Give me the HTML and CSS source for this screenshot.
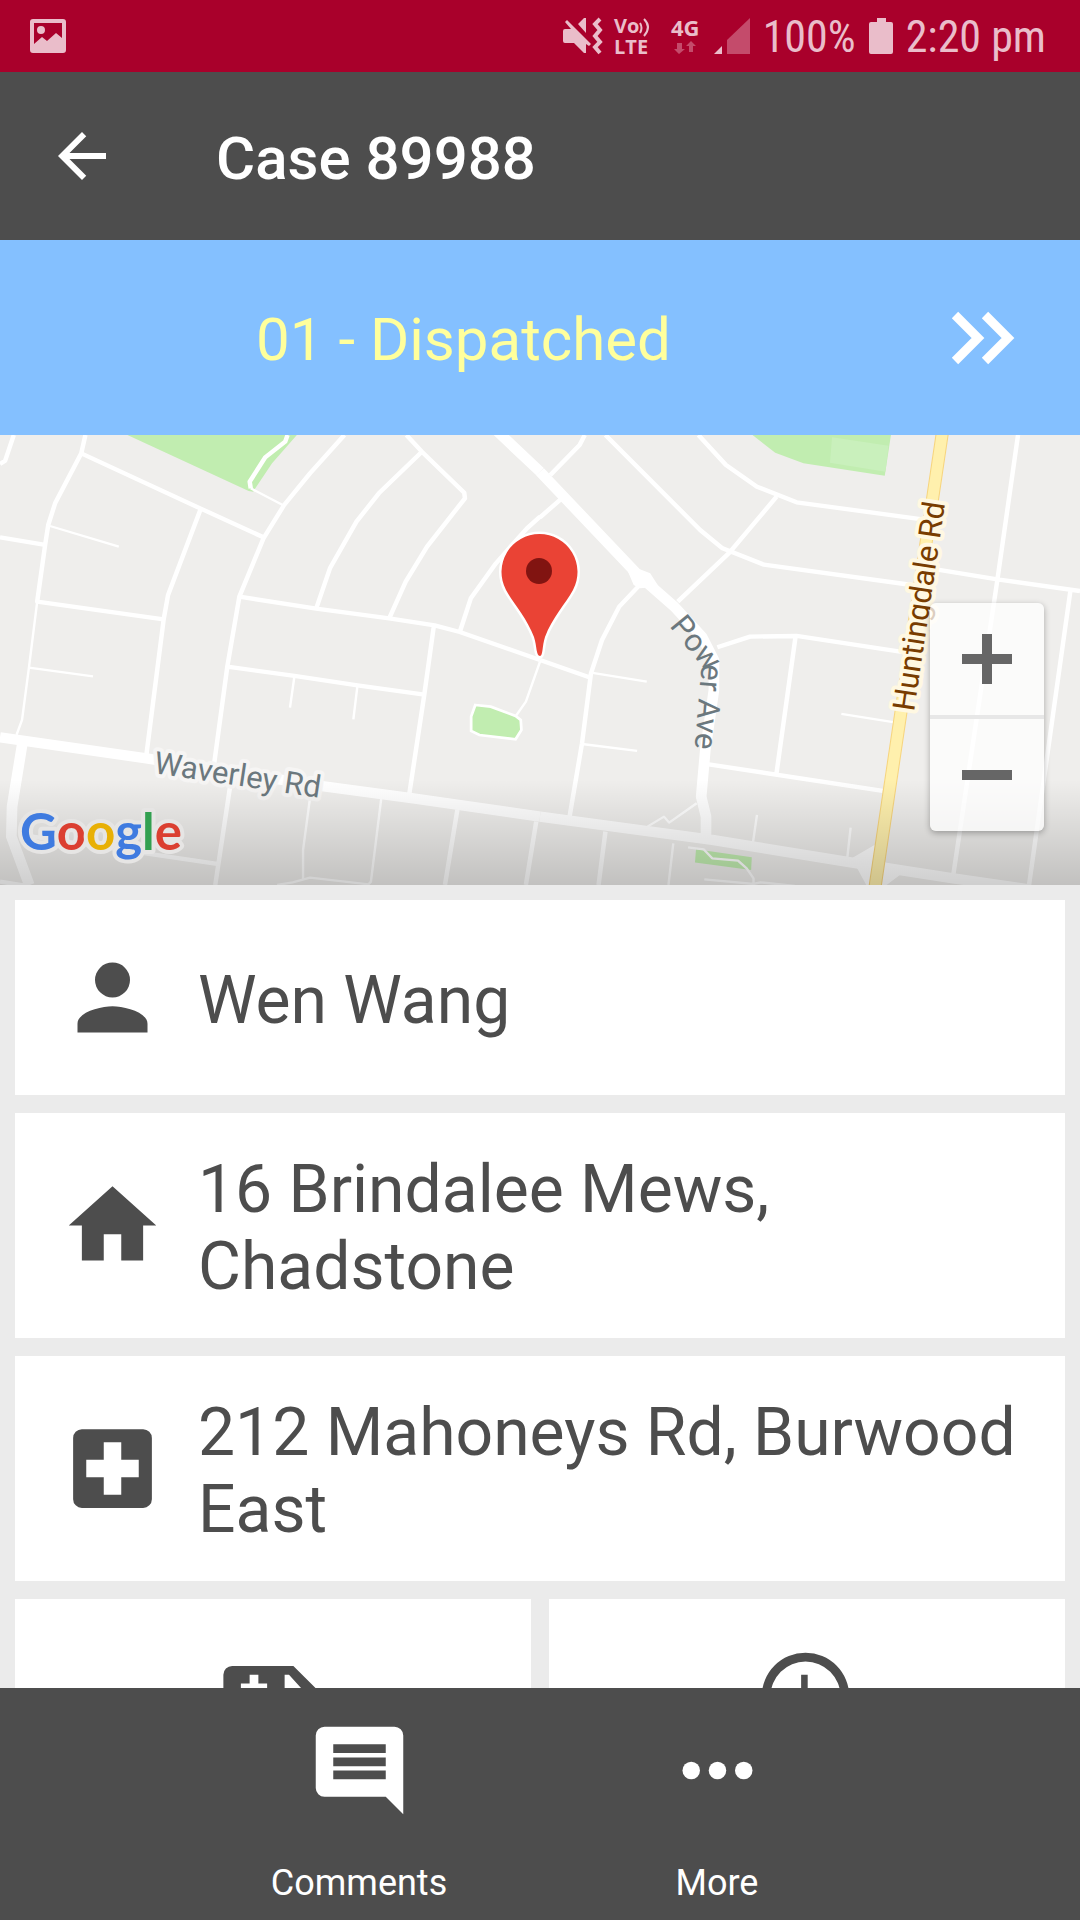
FILE: index.html
```html
<!DOCTYPE html>
<html lang="en">
<head>
<meta charset="utf-8">
<meta name="viewport" content="width=device-width, initial-scale=1">
<title>Case 89988</title>
<link rel="stylesheet" href="styles.css">
</head>
<body>
<div class="statusbar">
  <svg class="picture-icon" width="36" height="34" viewBox="0 0 36 34" aria-hidden="true">
    <path fill-rule="evenodd" d="M3 0H33a3 3 0 0 1 3 3V31a3 3 0 0 1-3 3H3a3 3 0 0 1-3-3V3a3 3 0 0 1 3-3ZM4 4V25L12 18L17 22L26 14L32 19V4ZM11 7a4 4 0 1 1 0 8a4 4 0 0 1 0-8Z"/>
  </svg>
  <div class="indicators">
    <svg width="38" height="36" viewBox="0 0 38 36" aria-hidden="true">
      <path d="M0 13a2 2 0 0 1 2-2H8L2 4L4 2L28 26L26 28L23 26V35H21L11 25H2a2 2 0 0 1-2-2ZM15 6L21 0H23V15Z"/>
      <path class="line" d="M37 1L32 6L37 12L32 18L37 24L32 29L37 35"/>
    </svg>
    <svg class="volte" width="36" height="36" viewBox="0 0 36 36" aria-hidden="true">
      <text class="tiny"><tspan x="0" y="15">Vo</tspan><tspan x="0" y="36">LTE</tspan></text>
      <path class="wave" d="M26 5Q29 10 26 15M30 1Q38 9 30 18"/>
    </svg>
    <svg width="30" height="36" viewBox="0 0 30 36" aria-hidden="true">
      <text class="tiny network-label" x="0" y="18">4G</text>
      <path class="dim" d="M6 25h5v6h3l-6 5l-5-5h3ZM18 34v-6h-3l5-5l5 5h-3v6Z"/>
    </svg>
    <svg width="36" height="36" viewBox="0 0 36 36" aria-hidden="true">
      <path d="M0 36L8 28V36Z"/>
      <path class="dim" d="M13 22L36 0V36H13Z"/>
    </svg>
    <span class="status-text">100%</span>
    <svg width="24" height="36" viewBox="0 0 24 36" aria-hidden="true">
      <path d="M8 0H17V4H22a2 2 0 0 1 2 2V34a2 2 0 0 1-2 2H2a2 2 0 0 1-2-2V6a2 2 0 0 1 2-2H8Z"/>
    </svg>
    <span class="status-text">2:20 pm</span>
  </div>
</div>

<header class="appbar">
  <button class="back" type="button" aria-label="Back">
    <svg width="72" height="72" viewBox="0 0 24 24"><path d="M20 11H7.83l5.59-5.59L12 4l-8 8 8 8 1.41-1.41L7.83 13H20v-2z"/></svg>
  </button>
  <h1 class="title">Case 89988</h1>
</header>

<div class="stage">
  <p class="stage-name">01 - Dispatched</p>
  <button class="stage-next" type="button" aria-label="Next stage">
    <svg width="64" height="54" viewBox="0 0 64 54"><path d="M4 4L27 27L4 50M34 4L57 27L34 50"/></svg>
  </button>
</div>

<main class="content">
  <section class="map" aria-label="Map">
    <svg class="map-canvas" viewBox="0 0 1080 450" preserveAspectRatio="xMidYMid slice">
      <defs>
        <linearGradient id="shade" x1="0" y1="0" x2="0" y2="1">
          <stop offset="0" stop-color="#000" stop-opacity="0"/>
          <stop offset="1" stop-color="#000" stop-opacity=".19"/>
        </linearGradient>
        <path id="power-ave" d="M669 191L705 235M702 225L692 344"/>
      </defs>

      <g transform="matrix(.3444 0 0 .3333 0 -5)">
        <path class="park" d="M370 15H862L790 100L735 185L722 183Z"/>
        <path class="lane" d="M108 515L84 713L64 870L48 915M145 288L345 350M84 713L270 739M728 175L825 227M855 738L842 833M1038 766L1026 868M1568 695L1527 815L1498 858M900 1105L880 1260V1347M805 1365L850 1357L900 1343L1070 1363L1077 1355L1107 1105"/>
        <path class="street" d="M40 15L15 92L0 102M248 15L236 70L160 220L140 285L131 345L108 515L475 568M236 70L583 236L765 322M0 322L131 345M583 236L488 495L475 570L425 975M1000 15L900 130L825 225L765 325L695 500L660 710L622 1000M835 15L828 35L770 82L725 155L728 175M695 500L918 536L1130 565L1262 586L1335 606L1568 690M1180 15L1225 65L1348 188L1350 205L1240 350L1178 455L1130 565M1225 65L1100 190L1035 275L958 415L918 536M1568 260L1530 295L1440 400L1367 505L1335 606M660 710L855 738L1038 766L1232 794M1260 586L1232 794L1188 1095M668 1070L625 1365M60 1215L630 1302M1328 1140L1292 1365M1557 1175L1527 1365M0 1355L90 1370"/>
        <path class="pond" d="M1380 825L1425 830L1497 858L1512 870L1514 900L1497 928L1392 915L1368 903V860Z"/>
        <path class="avenue" d="M0 922L425 985L930 1068L1200 1105L1568 1160M65 940L35 1130L33 1220L85 1365M1445 5L1568 125"/>
      </g>
      <g transform="matrix(.3444 0 0 .3333 540 -5)">
        <path class="park" d="M617 15H1019L1001 137L765 100L683 68Z"/>
        <path class="park-light" d="M848 22L1012 47L1003 125L842 98Z"/>
        <path class="park" d="M453 1258L615 1282L613 1320L450 1298Z"/>
        <path class="lane" d="M148 728L310 755M122 942L282 963M875 852L1030 877M387 1240L373 1365M630 1155L618 1240M902 1193L892 1285M455 1120L375 1178L360 1160L312 1190M430 1252L475 1258L500 1285L575 1292L600 1315L620 1345V1362M477 1348L620 1362L640 1357L740 1368"/>
        <path class="street" d="M130 15L115 45L30 135M60 208L0 262M190 15L465 300L530 355L650 404L1080 465M460 15L540 105L630 170L745 217L1110 268M687 200L550 368L400 515M285 470L230 530L180 630L148 730L122 940L85 1165M0 690L143 742M515 652L610 620L745 618L1060 667M742 620L686 1035M490 1003L995 1083M1388 15L1328 450L1200 1335M1150 418L1328 448L1568 483M1540 483L1420 1365M190 1205L170 1365"/>
        <path class="avenue" d="M0 125L280 430L390 530L470 620L505 690V780L480 960L468 1100L482 1160V1225M0 1160L500 1230L920 1300L1200 1345L1420 1378"/>
        <path class="junction" d="M245 400L320 430L345 470L290 475L272 465ZM905 1285L975 1243L1005 1300L1045 1335L1000 1370H950Z"/>
        <path class="highway-edge" d="M1168 10L973 1370"/>
        <path class="highway" d="M1168 10L973 1370"/>
      </g>

      <text class="road-label" transform="translate(153 338) rotate(8.5)">Waverley Rd</text>
      <text class="road-label road-label-curved"><textPath href="#power-ave">Power Ave</textPath></text>
      <text class="road-label road-label-main" transform="translate(914 277) rotate(-81.5)">Huntingdale Rd</text>

      <path class="pin" d="M540 221C536 221 537 211 534 202C527 183 513 168 506 155A38 38 0 1 1 573 155C566 168 552 183 545 202C542 211 543 221 540 221Z"/>
      <circle class="pin-dot" cx="539" cy="136" r="13"/>

      <rect y="345" width="1080" height="105" fill="url(#shade)"/>
      <text class="brand" x="20" y="415"><tspan class="blue">G</tspan><tspan class="red">o</tspan><tspan class="yellow">o</tspan><tspan class="blue">g</tspan><tspan class="green">l</tspan><tspan class="red">e</tspan></text>
    </svg>
    <div class="zoom">
      <button class="zoom-button" type="button" aria-label="Zoom in"><svg width="50" height="50" viewBox="0 0 50 50"><path d="M25 0V50M0 25H50"/></svg></button>
      <button class="zoom-button" type="button" aria-label="Zoom out"><svg width="50" height="50" viewBox="0 0 50 50"><path d="M0 25H50"/></svg></button>
    </div>
  </section>

  <div class="cards">
    <div class="card">
      <svg class="icon" viewBox="0 0 24 24" aria-hidden="true"><path d="M12 12a4 4 0 1 0 0-8a4 4 0 0 0 0 8ZM12 14c-2.67 0-8 1.34-8 4v2h16v-2c0-2.66-5.33-4-8-4Z"/></svg>
      <p class="card-text">Wen Wang</p>
    </div>
    <div class="card">
      <svg class="icon" viewBox="0 0 24 24" aria-hidden="true"><path d="M10 20v-6h4v6h5v-8h3L12 3 2 12h3v8z"/></svg>
      <p class="card-text">16 Brindalee Mews, Chadstone</p>
    </div>
    <div class="card">
      <svg class="icon" viewBox="0 0 24 24" aria-hidden="true"><path d="M18 14H14V18H10V14H6V10H10V6H14V10H18ZM19 3H5a2 2 0 0 0-2 2V19a2 2 0 0 0 2 2H19a2 2 0 0 0 2-2V5a2 2 0 0 0-2-2Z" fill-rule="evenodd"/></svg>
      <p class="card-text">212 Mahoneys Rd, Burwood East</p>
    </div>
    <div class="tiles">
      <button class="tile" type="button" aria-label="Vehicle">
        <svg class="icon" viewBox="0 0 24 24"><path fill-rule="evenodd" d="M17 5H3a2 2 0 0 0-2 2v9h2a3 3 0 0 0 6 0h6a3 3 0 0 0 6 0h2v-5ZM15 7v4h4.600L16 7ZM7 7v2H5v2h2v2h2v-2h2V9H9V7Z"/></svg>
      </button>
      <button class="tile" type="button" aria-label="Times">
        <svg class="icon" viewBox="0 0 24 24"><path fill-rule="evenodd" d="M12 2a10 10 0 1 0 0 20a10 10 0 0 0 0-20ZM12 4a8 8 0 1 1 0 16a8 8 0 0 1 0-16ZM12.500 7H11v6l5.250 3.150l.75-1.230l-4.500-2.670Z"/></svg>
      </button>
    </div>
  </div>
</main>

<nav class="tabs">
  <button class="tab" type="button">
    <svg class="icon" viewBox="0 0 24 24" aria-hidden="true"><path fill-rule="evenodd" d="M22 4a2 2 0 0 0-2-2H4a2 2 0 0 0-2 2v12a2 2 0 0 0 2 2h14l4 4ZM18 14H6v-2h12ZM18 11H6V9h12ZM18 8H6V6h12Z"/></svg>
    Comments
  </button>
  <button class="tab" type="button">
    <svg class="icon" viewBox="0 0 24 24" aria-hidden="true"><circle cx="6" cy="12" r="2"/><circle cx="12" cy="12" r="2"/><circle cx="18" cy="12" r="2"/></svg>
    More
  </button>
</nav>
</body>
</html>
```
FILE: styles.css
```css
* {
  box-sizing: border-box;
}

body {
  display: flex;
  flex-direction: column;
  height: 100vh;
  margin: 0;
  overflow: hidden;
  background: #ebebeb;
  color: #4d4d4d;
  font-family: Roboto, sans-serif;
}

h1,
p {
  margin: 0;
}

button {
  padding: 0;
  border: 0;
  background: none;
  color: inherit;
  font: inherit;
}

svg {
  display: block;
  flex: none;
  overflow: visible;
}

.icon {
  width: 105px;
  height: 105px;
  fill: currentColor;
}

/* System status bar */
.statusbar {
  display: flex;
  flex: none;
  align-items: center;
  justify-content: space-between;
  height: 72px;
  padding: 0 34px 0 30px;
  background: #a9002b;
  color: #eabdca;
  fill: #eabdca;
}

.indicators {
  display: flex;
  align-items: center;
  gap: 13px;
}

.status-text {
  padding-top: 2px;
  font-family: "Roboto Condensed", Roboto, sans-serif;
  font-size: 44px;
  line-height: 70px;
}

.volte {
  margin-right: 8px;
}

.tiny {
  font-family: "Open Sans", sans-serif;
  font-size: 20px;
  font-weight: 700;
}

.network-label {
  font-size: 22px;
}

.dim {
  fill: #c44b6b;
}

.line,
.wave {
  fill: none;
  stroke: #eabdca;
  stroke-width: 4;
}

.wave {
  stroke-width: 2;
}

/* App bar */
.appbar {
  display: flex;
  flex: none;
  align-items: center;
  gap: 98px;
  height: 168px;
  padding: 0 46px;
  background: #4d4d4d;
  color: #fff;
}

.back {
  fill: #fff;
}

.title {
  padding-top: 5px;
  font-size: 60px;
  font-weight: 500;
  line-height: 70px;
}

/* Stage banner */
.stage {
  display: flex;
  flex: none;
  align-items: center;
  height: 195px;
  background: #84c0ff;
}

.stage-name {
  flex: 1;
  padding: 5px 0 0 42px;
  color: #ffff9c;
  font-size: 60px;
  line-height: 70px;
  text-align: center;
}

.stage-next {
  display: grid;
  place-items: center;
  width: 195px;
  height: 195px;
}

.stage-next path {
  fill: none;
  stroke: #fff;
  stroke-width: 9;
}

.content {
  flex: 1;
  min-height: 0;
  overflow: hidden;
}

/* Map */
.map {
  position: relative;
  height: 450px;
  background: #efeeec;
  overflow: hidden;
}

.map-canvas {
  width: 100%;
  height: 100%;
}

.lane,
.street,
.avenue,
.highway,
.highway-edge {
  fill: none;
  stroke: #fff;
  stroke-linejoin: round;
}

.lane {
  stroke-width: 7;
}

.street {
  stroke-width: 13;
}

.avenue {
  stroke-width: 31;
}

.highway-edge {
  stroke: #f7d57e;
  stroke-width: 38;
}

.highway {
  stroke: #fff0ad;
  stroke-width: 32;
}

.junction {
  fill: #fff;
}

.park,
.pond {
  fill: #c1edb0;
}

.park-light {
  fill: #c9f0bc;
}

.pond {
  stroke: #fff;
  stroke-width: 8;
}

.road-label {
  fill: #6b787e;
  font-size: 31px;
  paint-order: stroke;
  stroke: #f6f5f4;
  stroke-linejoin: round;
  stroke-width: 8;
}

.road-label-curved {
  stroke: none;
}

.road-label-main {
  fill: #783c00;
  stroke: #fff8e2;
}

.pin {
  fill: #ea4335;
  paint-order: stroke;
  stroke: #fff;
  stroke-width: 5;
}

.pin-dot {
  fill: #811411;
}

.brand {
  font-family: Lato, sans-serif;
  font-size: 51px;
  font-weight: 700;
  paint-order: stroke;
  stroke: #e6e5e4;
  stroke-linejoin: round;
  stroke-width: 8;
}

.blue {
  fill: #3f7be0;
}

.red {
  fill: #db3f31;
}

.yellow {
  fill: #e8b006;
}

.green {
  fill: #32a050;
}

.zoom {
  position: absolute;
  right: 36px;
  bottom: 54px;
  width: 114px;
  border-radius: 6px;
  box-shadow: 0 2px 6px rgba(0, 0, 0, 0.3);
  overflow: hidden;
}

.zoom-button {
  display: grid;
  place-items: center;
  width: 100%;
  height: 112px;
  background: rgba(255, 255, 255, 0.75);
}

.zoom-button + .zoom-button {
  height: 116px;
  border-top: 4px solid #e7e7e7;
}

.zoom-button path {
  stroke: #666;
  stroke-width: 10;
}

/* Case details */
.cards {
  display: grid;
  gap: 18px;
  padding: 15px;
}

.card {
  display: flex;
  align-items: center;
  gap: 33px;
  min-height: 195px;
  padding: 0 45px;
  background: #fff;
}

.card-text {
  padding: 38px 0 33px;
  font-size: 66px;
  line-height: 77px;
}

.tiles {
  display: grid;
  grid-template-columns: 1fr 1fr;
  gap: 18px;
}

.tile {
  display: grid;
  place-items: center;
  height: 195px;
  padding-right: 4px;
  background: #fff;
}

/* Bottom tabs */
.tabs {
  display: grid;
  flex: none;
  grid-template-columns: 1fr 1fr;
  padding: 30px 184px 16px 180px;
  background: #4d4d4d;
  color: #fff;
}

.tab {
  display: flex;
  flex-direction: column;
  align-items: center;
  gap: 39px;
  font-size: 36px;
  line-height: 42px;
}
```
